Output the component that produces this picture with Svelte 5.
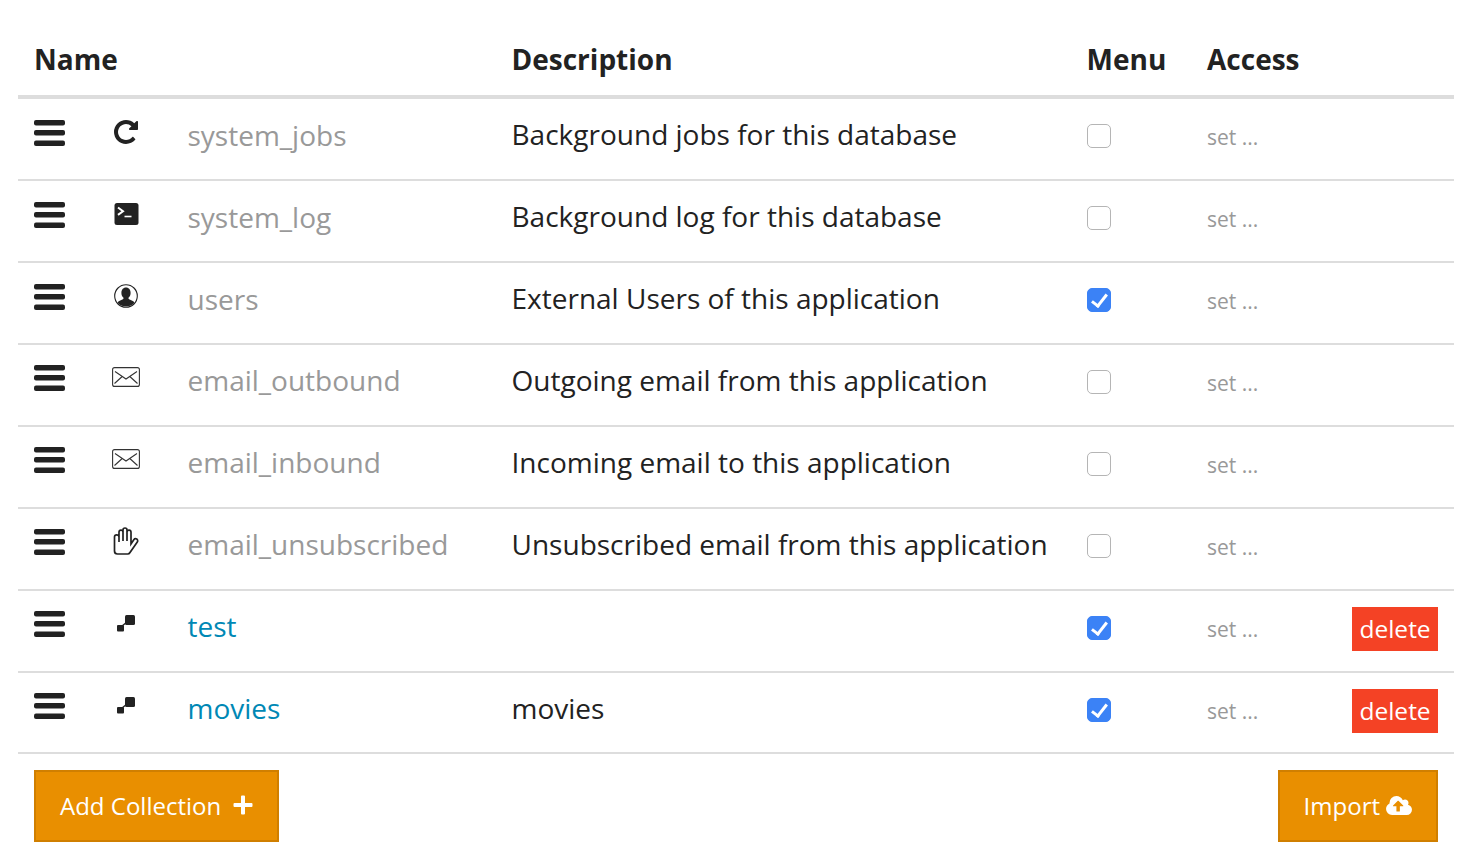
<script lang="ts">
    type Row = {
        name: string;
        icon: string;
        description: string;
        menu: boolean;
        custom?: boolean;
    };

    const rows: Row[] = [
        { name: "system_jobs", icon: "repeat", description: "Background jobs for this database", menu: false },
        { name: "system_log", icon: "terminal", description: "Background log for this database", menu: false },
        { name: "users", icon: "user", description: "External Users of this application", menu: true },
        { name: "email_outbound", icon: "mail", description: "Outgoing email from this application", menu: false },
        { name: "email_inbound", icon: "mail", description: "Incoming email to this application", menu: false },
        { name: "email_unsubscribed", icon: "hand", description: "Unsubscribed email from this application", menu: false },
        { name: "test", icon: "collection", description: "", menu: true, custom: true },
        { name: "movies", icon: "collection", description: "movies", menu: true, custom: true },
    ];
</script>

<div class="collections">
    <table>
        <colgroup>
            <col class="col-handle" />
            <col class="col-icon" />
            <col class="col-name" />
            <col class="col-desc" />
            <col class="col-menu" />
            <col class="col-access" />
            <col class="col-actions" />
        </colgroup>
        <thead>
            <tr>
                <th colspan="3">Name</th>
                <th class="tight">Description</th>
                <th class="tight">Menu</th>
                <th>Access</th>
                <th></th>
            </tr>
        </thead>
        <tbody>
            {#each rows as row (row.name)}
                <tr>
                    <td class="handle">
                        <svg width="32" height="27" viewBox="0 0 32 27" aria-hidden="true">
                            <rect x="0" y="0" width="31" height="5.5" rx="2" />
                            <rect x="0" y="10" width="31" height="5.5" rx="2" />
                            <rect x="0" y="20.5" width="31" height="5.5" rx="2" />
                        </svg>
                    </td>
                    <td class="icon">
                        <div class="icon-box">
                            {#if row.icon === "repeat"}
                                <svg width="24" height="24" viewBox="0 0 1536 1536" aria-hidden="true">
                                    <path d="M1536 128v448q0 26-19 45t-45 19h-448q-42 0-59-40-17-39 14-69l138-138q-148-137-349-137-104 0-198.5 40.5t-163.5 109.5-109.5 163.5-40.5 198.5 40.5 198.5 109.5 163.5 163.5 109.5 198.5 40.5q119 0 225-52t179-147q7-10 23-12 15 0 25 9l137 138q9 8 9.5 20.5t-7.5 22.5q-109 132-264 204.5t-327 72.5q-156 0-298-61t-245-164-164-245-61-298 61-298 164-245 245-164 298-61q147 0 284.5 55.5t244.5 156.5l130-129q29-31 70-14 39 17 39 59z" />
                                </svg>
                            {:else if row.icon === "terminal"}
                                <svg width="25" height="22" viewBox="0 0 25 22" aria-hidden="true">
                                    <rect x="0.5" y="0" width="24" height="22" rx="2.5" />
                                    <path d="M4 4.5l5 3.7-5 3.7" fill="none" stroke="#fff" stroke-width="2" />
                                    <path d="M10.5 13.5h7" fill="none" stroke="#fff" stroke-width="1.6" />
                                </svg>
                            {:else if row.icon === "user"}
                                <svg width="24" height="24" viewBox="0 0 24 24" aria-hidden="true">
                                    <circle cx="12" cy="12" r="11.3" fill="none" stroke="#222" stroke-width="1.1" />
                                    <path d="M12 3.6c3 0 4.6 2.5 4.6 5.3 0 2-.8 3.6-1.9 4.7-.4.5-.3 1.300.4 1.600l3.700 1.700c.9.400 1.400 1 1.600 1.800a11 11 0 0 1-16.800 0c.2-.8.700-1.400 1.600-1.800l3.700-1.700c.7-.3.800-1.100.4-1.600-1.100-1.100-1.900-2.700-1.900-4.700 0-2.800 1.600-5.300 4.600-5.300z" />
                                </svg>
                            {:else if row.icon === "mail"}
                                <svg width="28" height="20" viewBox="0 0 28 20" aria-hidden="true" class="outline">
                                    <rect x="0.6" y="0.6" width="26.8" height="18.800" rx="2" />
                                    <path d="M3 4.500l11 7.500 11-7.500M2.500 16.500l7.700-7M25.500 16.500l-7.700-7" />
                                </svg>
                            {:else if row.icon === "hand"}
                                <svg width="26" height="28" viewBox="0 0 26 28" aria-hidden="true" class="outline thick">
                                    <path d="M4.500 27C2.800 27 1.500 25.600 1.500 24V10C1.500 8.700 2.500 7.800 3.700 7.800S6 8.700 6 10V5.300C6 4 7 3.200 8 3.200S10 4 10 5V3C10 1.800 11 1 12 1S14 1.800 14 3V5C14 4 15 3.200 16 3.200S18 4 18 5.300V17L20.800 12.800C21.500 11.800 22.700 11.500 23.700 12.100S25 14 24.300 15L17 25.500C16.500 26.400 15.700 27 14.700 27ZM6 10V15M10 5V14M14 5V14" />
                                </svg>
                            {:else}
                                <svg width="18" height="17" viewBox="0 0 18 17" aria-hidden="true">
                                    <rect x="8" y="0" width="10" height="10" rx="1.500" />
                                    <rect x="0" y="10" width="7" height="6.500" rx="1" />
                                    <path d="M5 11l5-4" stroke="#222" stroke-width="1.5" />
                                </svg>
                            {/if}
                        </div>
                    </td>
                    <td class="name" class:custom={row.custom}>{row.name}</td>
                    <td class="desc">{row.description}</td>
                    <td class="menu"><input type="checkbox" checked={row.menu} /></td>
                    <td class="access">set ...</td>
                    <td class="actions">
                        {#if row.custom}
                            <button class="delete" type="button">delete</button>
                        {/if}
                    </td>
                </tr>
            {/each}
        </tbody>
    </table>

    <div class="footer">
        <button class="primary add" type="button">
            Add Collection
            <svg width="20" height="20" viewBox="0 0 20 20" aria-hidden="true">
                <path d="M8 1.500a1 1 0 0 1 1-1h2a1 1 0 0 1 1 1V8h6.500a1 1 0 0 1 1 1v2a1 1 0 0 1-1 1H12v6.500a1 1 0 0 1-1 1H9a1 1 0 0 1-1-1V12H1.500a1 1 0 0 1-1-1V9a1 1 0 0 1 1-1H8z" />
            </svg>
        </button>
        <button class="primary import" type="button">
            Import
            <svg width="26" height="19" viewBox="0 128 1920 1408" aria-hidden="true">
                <path d="M1280 864q0-14-9-23l-352-352q-9-9-23-9t-23 9l-351 351q-10 12-10 24 0 14 9 23t23 9h224v352q0 13 9.500 22.500t22.500 9.500h192q13 0 22.500-9.500t9.500-22.500v-352h224q13 0 22.500-9.500t9.500-22.500zm640 288q0 159-112.500 271.500t-271.500 112.500h-1088q-185 0-316.500-131.500t-131.500-316.500q0-130 70-240t188-165q-2-30-2-43 0-212 150-362t362-150q156 0 285.500 87t188.500 231q71-62 166-62 106 0 181 75t75 181q0 76-41 138 130 31 213.500 135.500t83.500 238.500z" />
            </svg>
        </button>
    </div>
</div>

<style>
    :global(body) {
        background: #fff;
    }

    .collections {
        padding: 18px 14px 0 18px;
        font-family: "Open Sans", sans-serif;
        color: #222;
    }

    table {
        width: 1436px;
        table-layout: fixed;
        border-collapse: collapse;
    }

    .col-handle { width: 78px; }
    .col-icon { width: 60px; }
    .col-name { width: 340px; }
    .col-desc { width: 575px; }
    .col-menu { width: 120px; }
    .col-access { width: 145px; }
    .col-actions { width: 118px; }

    th {
        height: 79px;
        padding: 4px 16px 0;
        border-bottom: 4px solid #ddd;
        text-align: left;
        font-size: 28px;
        font-weight: 700;
        line-height: 38px;
        box-sizing: border-box;
    }

    th.tight {
        padding-left: 15.5px;
    }

    td {
        height: 82px;
        padding: 14px 16px 0 15.5px;
        border-bottom: 2px solid #ddd;
        box-sizing: border-box;
        vertical-align: top;
        font-size: 28px;
        line-height: 42px;
        white-space: nowrap;
    }

    /* first row sits a pixel taller, the last a pixel shorter */
    tbody tr:first-child td {
        height: 83px;
    }

    tbody tr:last-child td {
        height: 81px;
    }

    td svg {
        display: block;
        fill: #222;
    }

    td.handle {
        padding: 21px 0 0 16px;
    }

    td.icon {
        padding: 19px 0 0;
    }

    td.name {
        padding: 15px 0 0 31.5px;
        color: #999;
    }

    tbody tr:nth-child(n + 4) td.handle {
        padding-top: 20px;
    }

    tbody tr:nth-child(n + 4) td.icon {
        padding-top: 18px;
    }

    tbody tr:nth-child(n + 4) td.name {
        padding-top: 14px;
    }

    .icon-box {
        display: flex;
        align-items: center;
        justify-content: center;
        height: 28px;
    }

    svg.outline {
        fill: none;
        stroke: #333;
        stroke-width: 1.1;
    }

    svg.thick {
        stroke: #222;
        stroke-width: 1.7;
    }

    td.name.custom {
        color: #0088b5;
    }

    td.access {
        padding: 17px 0 0 16px;
        color: #999;
        font-size: 21px;
        line-height: 42px;
    }

    td.menu {
        padding: 25px 0 0 16px;
    }

    input {
        appearance: none;
        display: block;
        position: relative;
        width: 24px;
        height: 24px;
        margin: 0;
        border: 1.500px solid #b5b5b5;
        border-radius: 5px;
        background: #fff;
        box-sizing: border-box;
    }

    input:checked {
        border-color: #3b82f6;
        background: #3b82f6;
    }

    input:checked::after {
        content: "";
        position: absolute;
        left: 6.500px;
        top: 1.500px;
        width: 6px;
        height: 13px;
        border: solid #fff;
        border-width: 0 3px 3px 0;
        transform: rotate(38deg);
    }

    td.actions {
        padding: 15px 16px 0 0;
        text-align: right;
    }

    button {
        font-family: inherit;
        color: #fff;
        cursor: pointer;
    }

    .delete {
        width: 86px;
        height: 44px;
        padding: 0;
        border: none;
        background: #f44225;
        font-size: 24.500px;
        line-height: 44px;
    }

    .footer {
        display: flex;
        justify-content: space-between;
        width: 1404px;
        padding: 16px 16px 0;
    }

    .primary {
        display: flex;
        align-items: center;
        height: 72px;
        padding: 0 24px 2px;
        border: 2px solid #d07f00;
        background: #e98f00;
        font-size: 24px;
        box-sizing: border-box;
    }

    .primary svg {
        display: block;
        fill: #fff;
    }

    .add {
        gap: 12px;
    }

    .import {
        gap: 6px;
    }
</style>
